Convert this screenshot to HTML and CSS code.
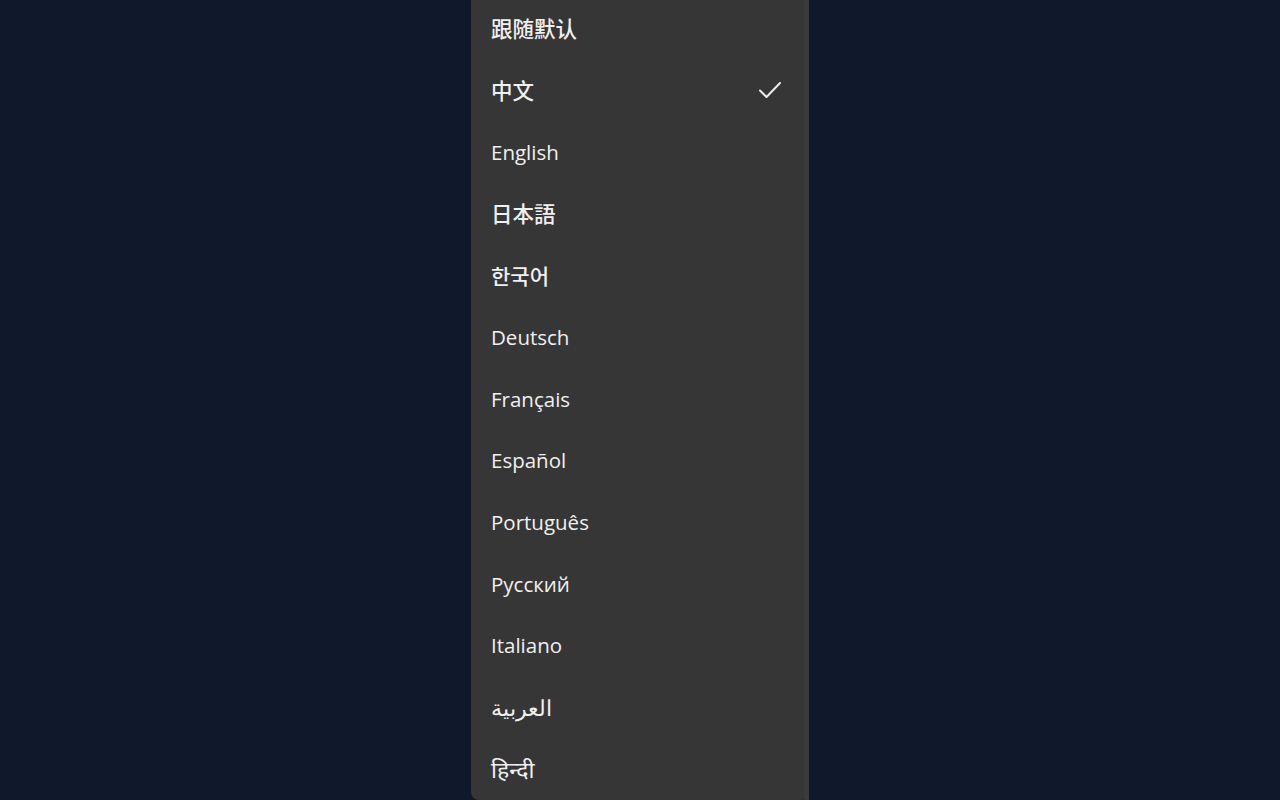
FILE: index.html
```html
<!DOCTYPE html>
<html lang="zh">
<head>
<meta charset="utf-8">
<link rel="stylesheet" href="styles.css">
</head>
<body>
<div class="stage">
  <div class="menu">
    <ul class="list">
      <li class="item"><span class="label cjk">跟随默认</span></li>
      <li class="item selected"><span class="label cjk">中文</span>
        <svg class="check" viewBox="0 0 24 24" width="24" height="24"><path d="M2 12.5 L8.5 19 L22 5" fill="none" stroke="#ececec" stroke-width="2" stroke-linecap="round" stroke-linejoin="round"/></svg>
      </li>
      <li class="item"><span class="label">English</span></li>
      <li class="item"><span class="label cjk" lang="ja">日本語</span></li>
      <li class="item"><span class="label ko" lang="ko">한국어</span></li>
      <li class="item"><span class="label">Deutsch</span></li>
      <li class="item"><span class="label">Français</span></li>
      <li class="item"><span class="label">Español</span></li>
      <li class="item"><span class="label">Português</span></li>
      <li class="item"><span class="label">Русский</span></li>
      <li class="item"><span class="label">Italiano</span></li>
      <li class="item"><span class="label ar" dir="rtl">العربية</span></li>
      <li class="item"><span class="label hi">हिन्दी</span></li>
    </ul>
    <div class="track"></div>
  </div>
</div>
</body>
</html>
```

FILE: styles.css
```css
html, body {
  margin: 0;
  padding: 0;
  height: 100%;
  background: #10182b;
  overflow: hidden;
}
body {
  font-family: "Open Sans", "Noto Sans", "Noto Sans CJK SC", "Noto Sans CJK JP", "Noto Sans CJK KR", sans-serif;
  color: #f0f0f0;
}
.stage {
  display: flex;
  justify-content: center;
}
.menu {
  display: flex;
  width: 338px;
  margin-top: -2px;
  background: #363637;
  border-radius: 0 0 8px 8px;
}
.list {
  list-style: none;
  margin: 0;
  padding: 0;
  flex: 1;
}
.item {
  height: 61.67px;
  display: flex;
  align-items: center;
  justify-content: space-between;
  padding: 0 22px 0 20px;
  font-size: 20.5px;
}
.label {
  white-space: nowrap;
}
.cjk {
  font-family: "Noto Sans CJK SC", "Noto Sans CJK JP", sans-serif;
  font-size: 21.5px;
  font-weight: 500;
  position: relative;
  top: -1px;
}
.ko {
  font-family: "Noto Sans CJK KR", sans-serif;
  font-size: 21px;
  font-weight: 500;
}
.ar {
  font-size: 21.5px;
}
.hi {
  font-size: 23px;
}
.check {
  display: block;
}
.track {
  width: 5px;
  background: #3b3b3c;
}
```
